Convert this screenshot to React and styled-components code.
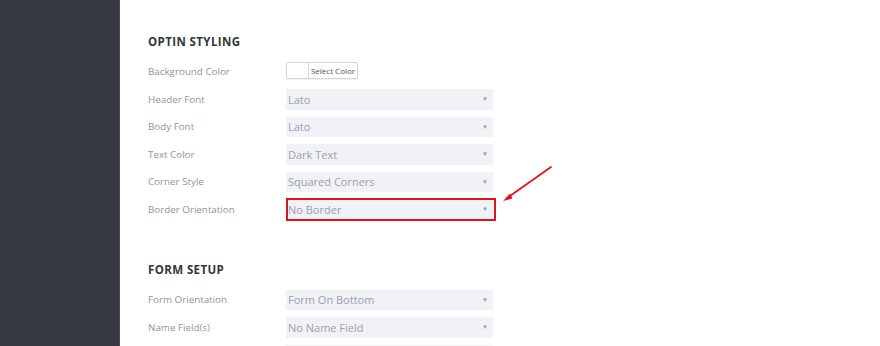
import React from "react";
import styled, {createGlobalStyle} from "styled-components";

const GlobalStyle = createGlobalStyle`
  html, body {
    margin:0;
    padding:0;
    background:#fff;
    font-family:"Open Sans", "Liberation Sans", sans-serif;
  }
`

const optinRows = [
  {label:"Header Font", value:"Lato"},
  {label:"Body Font", value:"Lato"},
  {label:"Text Color", value:"Dark Text"},
  {label:"Corner Style", value:"Squared Corners"},
  {label:"Border Orientation", value:"No Border", marked:true}
]

const formRows = [
  {label:"Form Orientation", value:"Form On Bottom"},
  {label:"Name Field(s)", value:"No Name Field"},
  {label:"", value:""}
]

const SelectBox = ({value, marked}) => (
  <Select>
    <SelectText>{value}</SelectText>
    {value && <Caret>▼</Caret>}
    {marked && <Highlight />}
  </Select>
)

const App = () => {
  return (
    <Page>
      <GlobalStyle />
      <Sidebar />
      <Main>
        <Section>
          <Heading>OPTIN STYLING</Heading>
          <Row>
            <Label>Background Color</Label>
            <ColorButton>
              <Swatch />
              <ColorText>Select Color</ColorText>
            </ColorButton>
          </Row>
          {optinRows.map(({label, value, marked}, key) => (
            <Row key={key}>
              <Label>{label}</Label>
              <SelectBox value={value} marked={marked} />
            </Row>
          ))}
        </Section>
        <Section $second>
          <Heading>FORM SETUP</Heading>
          {formRows.map(({label, value}, key) => (
            <Row key={key}>
              <Label>{label}</Label>
              <SelectBox value={value} />
            </Row>
          ))}
        </Section>
        <Arrow width="60" height="46" viewBox="0 0 60 46">
          <line x1="56" y1="2" x2="12" y2="33" stroke="#e8131b" strokeWidth="1.8" strokeLinecap="round" />
          <polygon points="8,36 15,28.5 17.5,33.5" fill="#e8131b" />
        </Arrow>
      </Main>
    </Page>
  )
};

export default App;

const Page = styled.div`
  display:flex;
  width:880px;
  height:346px;
  overflow:hidden;
`

const Sidebar = styled.div`
  width:119px;
  flex-shrink:0;
  background:#373a44;
  border-right:1px solid #4a4e59;
`

const Main = styled.div`
  position:relative;
  flex:1;
  padding:34px 0 0 28px;
`

const Section = styled.div`
  display:flex;
  flex-direction:column;
  gap:7px;
  margin-top:${p => p.$second ? "42.5px" : "0"};
`

const Heading = styled.div`
  font-size:11.5px;
  line-height:16px;
  font-weight:700;
  letter-spacing:0.4px;
  color:#32373c;
  margin-bottom:4.5px;
`

const Row = styled.div`
  display:grid;
  grid-template-columns:138px 207px;
  align-items:center;
  height:20.5px;
`

const Label = styled.div`
  font-size:9.8px;
  color:#8d93a4;
  white-space:nowrap;
`

const ColorButton = styled.div`
  align-self:start;
  display:flex;
  width:72px;
  height:17px;
  box-sizing:border-box;
  border:1px solid #d3d6dc;
  border-radius:2px;
  background:#fff;
  box-shadow:0 1px 1px rgba(0,0,0,0.06);
`

const Swatch = styled.div`
  width:21px;
  border-right:1px solid #d8dbe0;
`

const ColorText = styled.div`
  flex:1;
  font-size:8px;
  line-height:15px;
  text-align:center;
  white-space:nowrap;
  color:#4f545c;
`

const Select = styled.div`
  position:relative;
  display:flex;
  align-items:center;
  justify-content:space-between;
  height:20.5px;
  padding:0 4px 0 2px;
  background:#f1f2f6;
`

const SelectText = styled.span`
  font-size:11px;
  color:#9ba0b0;
`

const Caret = styled.span`
  font-size:6px;
  color:#9499a6;
  margin-right:1px;
`

const Highlight = styled.div`
  position:absolute;
  left:0;
  right:-3px;
  top:-1px;
  bottom:-1px;
  border:2px solid #e4121b;
`

const Arrow = styled.svg`
  position:absolute;
  left:375px;
  top:165px;
`
